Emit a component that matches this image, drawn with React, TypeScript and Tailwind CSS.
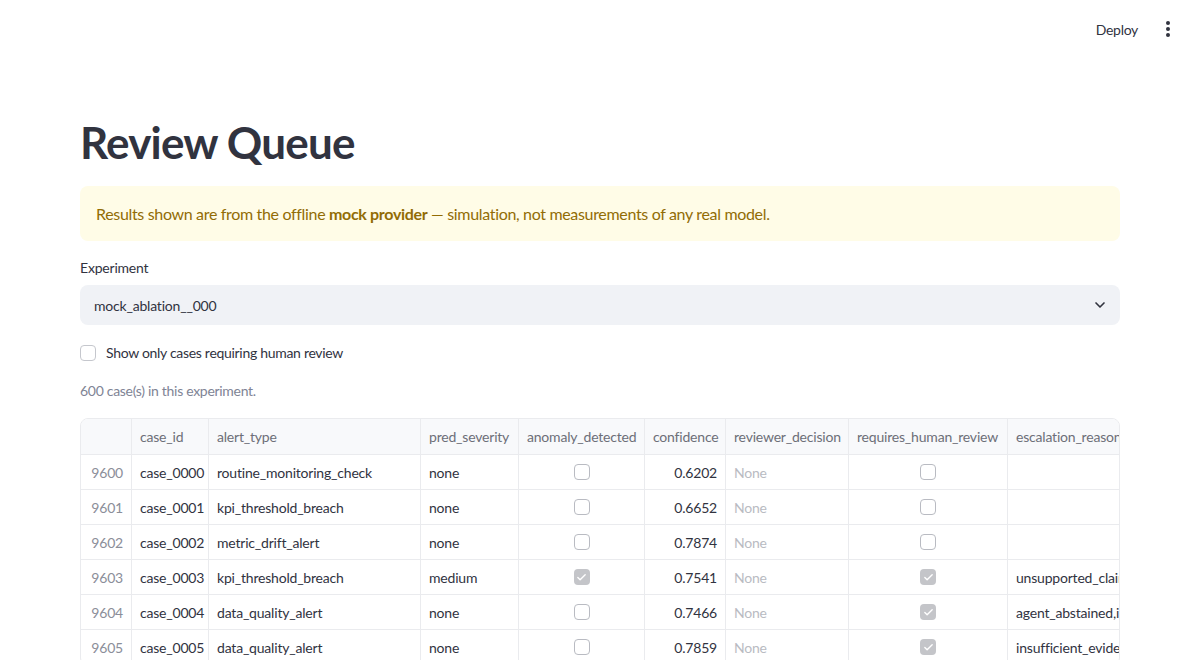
import { ChevronDown, Check } from 'lucide-react'

type Row = {
  idx: number
  caseId: string
  alertType: string
  severity: string
  anomaly: boolean
  confidence: string
  review: boolean
  reason: string
}

const ROWS: Row[] = [
  { idx: 9600, caseId: 'case_0000', alertType: 'routine_monitoring_check', severity: 'none', anomaly: false, confidence: '0.6202', review: false, reason: '' },
  { idx: 9601, caseId: 'case_0001', alertType: 'kpi_threshold_breach', severity: 'none', anomaly: false, confidence: '0.6652', review: false, reason: '' },
  { idx: 9602, caseId: 'case_0002', alertType: 'metric_drift_alert', severity: 'none', anomaly: false, confidence: '0.7874', review: false, reason: '' },
  { idx: 9603, caseId: 'case_0003', alertType: 'kpi_threshold_breach', severity: 'medium', anomaly: true, confidence: '0.7541', review: true, reason: 'unsupported_claim' },
  { idx: 9604, caseId: 'case_0004', alertType: 'data_quality_alert', severity: 'none', anomaly: false, confidence: '0.7466', review: true, reason: 'agent_abstained,insufficient' },
  { idx: 9605, caseId: 'case_0005', alertType: 'data_quality_alert', severity: 'none', anomaly: false, confidence: '0.7859', review: true, reason: 'insufficient_evidence' },
]

const font = { fontFamily: 'Lato, "Noto Sans", sans-serif' }

function CellBox({ checked }: { checked: boolean }) {
  if (checked) {
    return (
      <span className="w-4 h-4 rounded-[4px] bg-[#c4c5c9] flex items-center justify-center">
        <Check size={11} strokeWidth={3} className="text-white" />
      </span>
    )
  }
  return <span className="w-4 h-4 rounded-[4px] border border-[#b9bbc2] bg-white" />
}

const cell = 'h-[35px] border-r border-b border-[#eaebee] px-2 flex items-center text-[14px] tracking-[-0.2px] overflow-hidden whitespace-nowrap'
const head = 'h-[36px] border-r border-b border-[#eaebee] px-2 flex items-center text-[14px] tracking-[-0.2px] text-[#6d6f78] bg-[#f8f9fb] whitespace-nowrap overflow-hidden'

export default function App() {
  return (
    <div className="min-h-screen bg-white text-[#31333f]" style={font}>
      <div className="h-[58px] flex items-center justify-end pr-[24px] gap-[22px]">
        <span className="text-[14px] tracking-[-0.3px]">Deploy</span>
        <span className="flex flex-col gap-[2.5px] items-center w-4">
          <span className="w-[3.5px] h-[3.5px] rounded-full bg-[#31333f]" />
          <span className="w-[3.5px] h-[3.5px] rounded-full bg-[#31333f]" />
          <span className="w-[3.5px] h-[3.5px] rounded-full bg-[#31333f]" />
        </span>
      </div>

      <div className="mx-[80px] pt-[58px]">
        <h1 className="text-[44px] font-bold leading-[52px] tracking-[-0.8px]">Review Queue</h1>

        <div className="mt-[18px] h-[55px] rounded-[8px] bg-[#fffce7] px-4 flex items-center text-[16px] tracking-[-0.33px] text-[#926c05]">
          <span>
            Results shown are from the offline <b className="font-bold">mock provider</b> — simulation, not measurements of any real model.
          </span>
        </div>

        <div className="mt-[18px] text-[14px] leading-[18px] tracking-[-0.2px]">Experiment</div>
        <div className="mt-[8px] h-[40px] rounded-[8px] bg-[#f0f2f6] flex items-center justify-between pl-[14px] pr-[12px] text-[14px] tracking-[-0.2px]">
          <span>mock_ablation__000</span>
          <ChevronDown size={16} strokeWidth={2.5} />
        </div>

        <div className="mt-[17px] flex items-center gap-[10px] text-[14px] tracking-[-0.3px]">
          <span className="w-4 h-4 rounded-[4px] border border-[#c5c7cd] bg-white" />
          <span>Show only cases requiring human review</span>
        </div>

        <div className="mt-[17px] text-[14px] tracking-[-0.3px] text-[#808495]">600 case(s) in this experiment.</div>

        <div className="mt-[17px] border border-[#eaebee] rounded-[8px] overflow-hidden">
          <div className="grid grid-cols-[51px_77px_212px_98px_126px_81px_123px_159px_160px]">
            <div className={head} />
            <div className={head}>case_id</div>
            <div className={head}>alert_type</div>
            <div className={head}>pred_severity</div>
            <div className={head}>anomaly_detected</div>
            <div className={head}>confidence</div>
            <div className={head}>reviewer_decision</div>
            <div className={head}>requires_human_review</div>
            <div className={head}>escalation_reason</div>
            {ROWS.map(r => (
              <div key={r.idx} className="contents">
                <div className={`${cell} justify-end text-[#8b8e99]`}>{r.idx}</div>
                <div className={cell}>{r.caseId}</div>
                <div className={cell}>{r.alertType}</div>
                <div className={cell}>{r.severity}</div>
                <div className={`${cell} justify-center`}><CellBox checked={r.anomaly} /></div>
                <div className={`${cell} justify-end`}>{r.confidence}</div>
                <div className={`${cell} text-[#b9bbc2]`}>None</div>
                <div className={`${cell} justify-center`}><CellBox checked={r.review} /></div>
                <div className={cell}>{r.reason}</div>
              </div>
            ))}
          </div>
        </div>
      </div>
    </div>
  )
}
